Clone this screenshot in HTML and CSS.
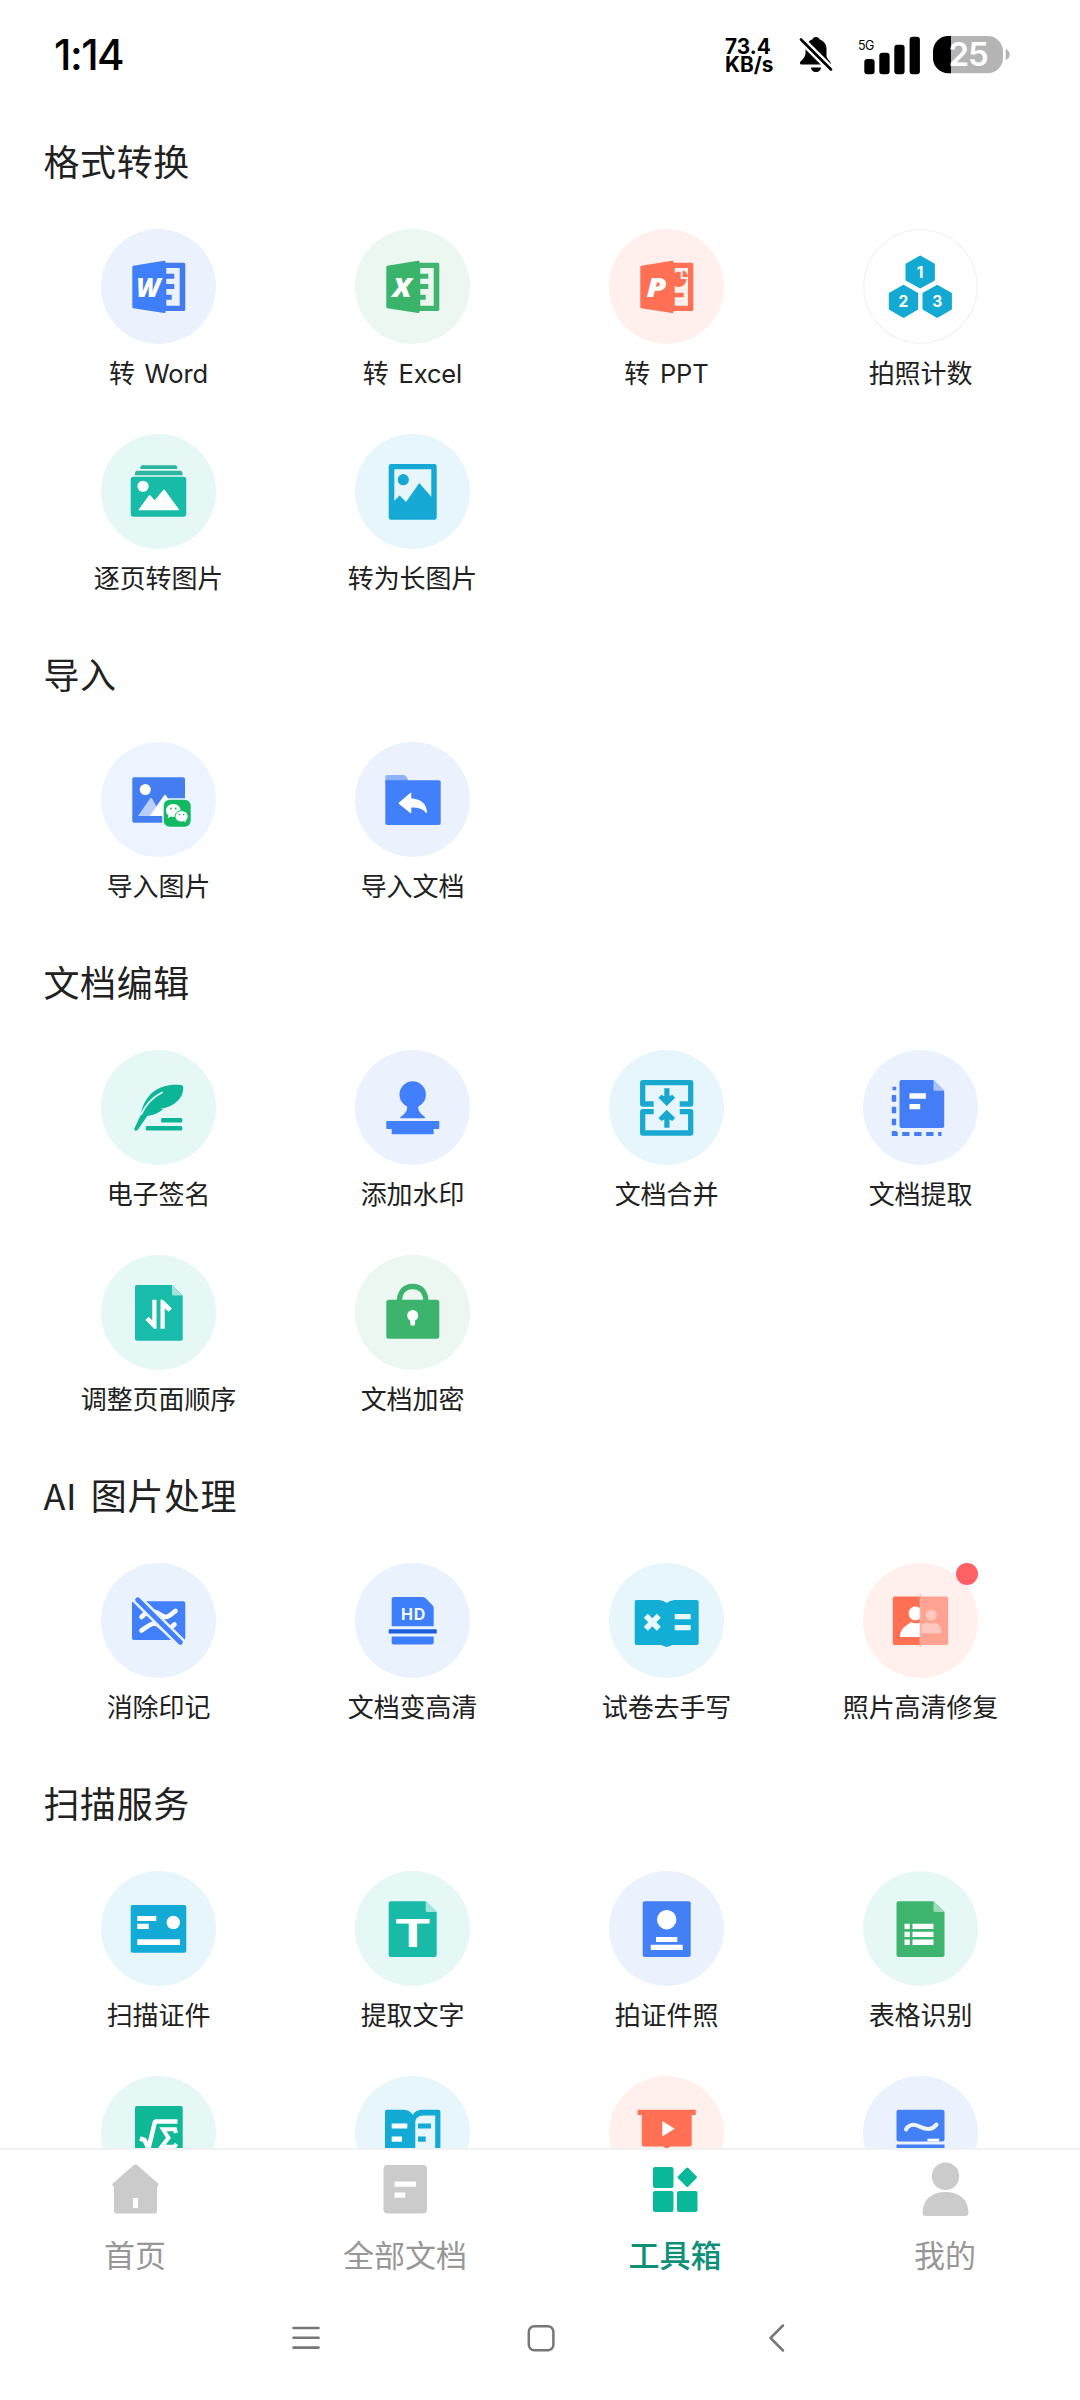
FILE: index.html
```html
<!DOCTYPE html>
<html lang="zh-CN">
<head>
<meta charset="utf-8">
<title>工具箱</title>
<link rel="stylesheet" href="styles.css">
</head>
<body>
<div class="screen">
<header class="status">
  <time class="clock">1:14</time>
  <div class="speed"><span>73.4</span><span>KB/s</span></div>
  <svg class="bell" width="34" height="37" viewBox="0 0 34 37">
    <path d="M17 1c2 0 3.300 1 3.600 2.600C25 5 27.500 8.500 27.500 13v7c0 3 4.500 5 4.500 8.500H3C.5 28.500.5 26.500 2 25c3-3 4.500-5 4.500-8V13c0-4.500 2.500-8 6.900-9.400C13.700 2 15 1 17 1z"/>
    <path d="M12 31.500h10c0 2.500-2.200 4.500-5 4.500s-5-2-5-4.500z"/>
    <path d="M1.500 3l30.500 30.500" stroke="#fff" stroke-width="7.500"/>
    <path d="M2 3.500l30 30" stroke="#000" stroke-width="2.700" stroke-linecap="round"/>
  </svg>
  <svg class="signal" width="62" height="39" viewBox="0 0 62 39">
    <text x="0" y="14" class="net">5G</text>
    <rect x="6.300" y="23" width="10.300" height="15.300" rx="3"/>
    <rect x="21.300" y="16.700" width="10.300" height="21.600" rx="3"/>
    <rect x="36.300" y="8.700" width="10.300" height="29.600" rx="3"/>
    <rect x="51.600" y=".7" width="10.300" height="37.600" rx="3"/>
  </svg>
  <svg class="battery" width="78" height="38" viewBox="0 0 78 38">
    <path d="M15.300 0h39.400a15.300 15.300 0 0 1 15.300 15.300v6.700a15.300 15.300 0 0 1-15.300 15.300H18V0z" fill="#b4b4b4"/>
    <path d="M18 0v37.300h-2.700A15.300 15.300 0 0 1 0 22v-6.700A15.300 15.300 0 0 1 15.300 0z"/>
    <path d="M72.700 13q4 1.500 4 5.500t-4 5.500z" fill="#b4b4b4"/>
    <text x="15.500" y="30.300" class="level">25</text>
  </svg>
</header>

<main class="content">
<section class="group">
  <h2>格式转换</h2>
  <div class="grid">
    <a class="tool"><span class="disc indigo"><svg viewBox="0 0 115 115">
      <path fill="#427bef" fill-rule="evenodd" d="M64 33.700h18.800q1.500 0 1.500 1.500v45.300q0 1.500-1.500 1.500H64zM65.300 39v5.700h8v5h-8V55h8v5h-8v5.700h5.400v5h-5.400v6h13.400V39z"/>
      <path fill="#3f7ffc" d="M31.300 38q0-1 1-1.200L63 31.700q1.500-.3 1.500 1V83q0 1.300-1.500 1L32.300 79.200q-1-.2-1-1.200z"/>
      <text class="app" x="35.300" y="67.500" textLength="24" lengthAdjust="spacingAndGlyphs">W</text>
    </svg></span><span class="name">转 <i>Word</i></span></a>
    <a class="tool"><span class="disc green"><svg viewBox="0 0 115 115">
      <path fill="#3fb56f" fill-rule="evenodd" d="M64 33.700h18.800q1.500 0 1.500 1.500v45.300q0 1.500-1.500 1.500H64zM65.300 39v5.700h8v5h-8V55h8v5h-8v5.700h5.400v5h-5.400v6h13.400V39z"/>
      <path fill="#3bb46b" d="M31.300 38q0-1 1-1.200L63 31.700q1.500-.3 1.500 1V83q0 1.300-1.500 1L32.300 79.200q-1-.2-1-1.200z"/>
      <text class="app" x="37.500" y="67.800" textLength="19" lengthAdjust="spacingAndGlyphs">X</text>
    </svg></span><span class="name">转 <i>Excel</i></span></a>
    <a class="tool"><span class="disc red"><svg viewBox="0 0 115 115">
      <path fill="#ff7054" fill-rule="evenodd" d="M64 33.700h18.800q1.500 0 1.500 1.500v45.300q0 1.500-1.500 1.500H64zM65.700 39v5q3-2 6-1v7h6q-1 7-7.500 8-3 0-4.500-1v6.700h9V68.300h-9v8.400H79V39z"/>
      <path fill="#ff7054" d="M73.500 41.500q5 1 5.500 6.500h-5.500z"/>
      <path fill="#ff7054" d="M31.300 38q0-1 1-1.200L63 31.700q1.500-.3 1.500 1V83q0 1.300-1.500 1L32.300 79.200q-1-.2-1-1.200z"/>
      <text class="app" x="37.500" y="68" textLength="20" lengthAdjust="spacingAndGlyphs">P</text>
    </svg></span><span class="name">转 <i>PPT</i></span></a>
    <a class="tool"><span class="disc plain"><svg viewBox="0 0 115 115">
      <g fill="#14a9d3" stroke="#14a9d3" stroke-width="2" stroke-linejoin="round">
      <path d="M57.200 27.500l13.700 7.800v15.500l-13.700 7.700-13.700-7.700V35.300z"/>
      <path d="M40.500 56.800l13.700 7.800V80l-13.700 7.800L26.800 80V64.600z"/>
      <path d="M74.200 56.800l13.700 7.800V80l-13.700 7.800L60.500 80V64.600z"/></g>
      <g class="digit"><text x="57.200" y="48.700">1</text><text x="40.500" y="78">2</text><text x="74.200" y="78">3</text></g>
    </svg></span><span class="name">拍照计数</span></a>
    <a class="tool"><span class="disc teal"><svg viewBox="0 0 115 115">
      <path fill="#2db5a0" d="M41 31.300h33.500q1.800 0 1.800 3.700h-37q0-3.700 1.700-3.700zM36 36.700h43.500q2 0 2.200 4.600h-48q.2-4.600 2.300-4.600z"/>
      <rect x="29.700" y="42.700" width="55.600" height="40" rx="3" fill="#18bba7"/>
      <g fill="#fff"><circle cx="42" cy="52.300" r="5.600"/><path d="M38 76.300q-.8 0-.3-.8l10-13.700q1-1.200 2 0l4 4.500 8.500-10.400q.8-1 1.600 0L78 75.500q.4.800-.4.800z"/></g>
    </svg></span><span class="name">逐页转图片</span></a>
    <a class="tool"><span class="disc cyan"><svg viewBox="0 0 115 115">
      <path fill="#16a9d6" fill-rule="evenodd" d="M36 30h43.500q2.200 0 2.200 2.200v51.300q0 2.200-2.200 2.200H36q-2.300 0-2.300-2.200V32.200Q33.700 30 36 30zM39.300 35.300v31.400l5.400-5.200L51 68l13.300-19 12 13.700V35.300z"/>
      <circle cx="48.300" cy="45.700" r="5.600" fill="#16a9d6"/>
    </svg></span><span class="name">转为长图片</span></a>
  </div>
</section>

<section class="group">
  <h2>导入</h2>
  <div class="grid">
    <a class="tool"><span class="disc blue"><svg viewBox="0 0 115 115">
      <rect x="31.300" y="35.300" width="52.700" height="45.400" rx="2" fill="#447def"/>
      <circle cx="44.300" cy="47.500" r="5.500" fill="#fff"/>
      <path fill="#b9cffc" d="M37 74l12-17.500q1-1.300 2 0L61 74z"/><path fill="#fff" d="M48.700 74l14.300-20.500q1-1.300 2 0L79 74z"/>
      <rect x="61.200" y="56.200" width="30" height="30" rx="7.500" fill="#eff9ff"/>
      <rect x="62.700" y="57.700" width="27" height="27" rx="6" fill="#12b961"/>
      <path fill="#fff" d="M72.300 62c4 0 7.300 2.900 7.300 6.500s-3.300 6.500-7.300 6.500l-2.500-.4-3.200 1.700.8-2.800c-1.500-1.200-2.400-3-2.400-5 0-3.600 3.300-6.500 7.300-6.500z"/>
      <path fill="#fff" stroke="#12b961" stroke-width="1" d="M80.600 68.700c3.700 0 6.500 2.500 6.500 5.700 0 1.800-.9 3.300-2.200 4.300l.6 2.500-2.700-1.500-2.200.3c-3.700 0-6.500-2.400-6.500-5.600s2.800-5.700 6.500-5.700z"/>
      <g fill="#12b961"><circle cx="70" cy="66.500" r=".9"/><circle cx="74.700" cy="66.500" r=".9"/><circle cx="78.400" cy="72.600" r=".8"/><circle cx="82.600" cy="72.600" r=".8"/></g>
    </svg></span><span class="name">导入图片</span></a>
    <a class="tool"><span class="disc indigo"><svg viewBox="0 0 115 115">
      <path fill="#8eb2fb" d="M32 33h16.500q1.800 0 2.800 1.500l3 5.500h-24v-5q0-2 1.700-2z"/>
      <path fill="#427ffa" d="M30.300 38.300h53.400q2 0 2 2V81q0 2-2 2H32.300q-2 0-2-2z"/>
      <path fill="#fff" d="M44 60.500l11.300-9.600q1-.8 1 .5v5C65 56.500 71.500 61 72 70q0 2-1.200.5Q66 65 56.300 65.500v4.800q0 1.500-1 .6L44 62q-.8-.7 0-1.500z"/>
    </svg></span><span class="name">导入文档</span></a>
  </div>
</section>

<section class="group">
  <h2>文档编辑</h2>
  <div class="grid">
    <a class="tool"><span class="disc teal2"><svg viewBox="0 0 115 115">
      <g fill="#0cb597"><path d="M40.300 62.500C41.500 55 46 47 52 42c8-6.500 18-8 28-7q2.500.5 2.300 3c0 7-4 13-12 17.500-4 2-8 2.700-11 3.200l3 .3c-4 3.500-9 6-16 7L37 79.500q-1 1.500-3 1-1.400-.5-.6-2l7-15z"/>
      <path fill="none" stroke="#e5f8f5" stroke-width="1.800" stroke-linecap="round" d="M61 42.500C51 47.500 45 54 40.500 64"/>
      <rect x="60" y="68" width="21.300" height="4.500" rx="1.500"/><rect x="44.700" y="76" width="36.600" height="4.500" rx="1.500"/></g>
    </svg></span><span class="name">电子签名</span></a>
    <a class="tool"><span class="disc indigo"><svg viewBox="0 0 115 115">
      <g fill="#427ffa"><circle cx="57.700" cy="44.500" r="13.200"/><path d="M52 55h11.400c-1 6 2.600 9 6.600 12q1 1.300-.5 1.300H46q-1.500 0-.5-1.300c4-3 7.500-6 6.500-12z"/>
      <path d="M32 71h51.500q.8 0 .8.800v6.400q0 .8-.8.800h-4.800v4.500q0 .8-.8.800H37.500q-.8 0-.8-.8V79H32q-.7 0-.7-.8v-6.400q0-.8.700-.8z"/></g>
    </svg></span><span class="name">添加水印</span></a>
    <a class="tool"><span class="disc cyan2"><svg viewBox="0 0 115 115">
      <g fill="none" stroke="#19a9d0" stroke-width="5.300" stroke-linejoin="round"><path d="M44.700 54h-11V32.700h48V54h-11M44.700 61.700h-11V83h48V61.700h-11"/></g>
      <g fill="#19a9d0"><path d="M55.300 38.300h5.200v7.900l2.700-1.500 3 3-8.500 8.200-8.300-8.200 3-3 2.900 1.500z"/><path d="M55.300 77.700h5.200v-8.300l2.700 1.500 3-3-8.500-8.200-8.300 8.200 3 3 2.900-1.500z"/></g>
    </svg></span><span class="name">文档合并</span></a>
    <a class="tool"><span class="disc indigo"><svg viewBox="0 0 115 115">
      <g fill="#447df5"><path d="M38.500 30h32l10.700 10.700V76q0 2-2 2H38.500q-2 0-2-2V32q0-2 2-2z"/>
      <path d="M29.500 36.700h3.700v3.600h-3.700zM28.800 45h4.400v6.700h-4.400zM28.800 56.700h4.400v6.600h-4.400zM28.800 68.700h4.400v6.600h-4.400zM28.800 81h4.400l1.600 1.500V86h-6zM39.200 82h7.300v4h-7.300zM51.200 82h7.300v4h-7.300zM63.200 82h7.300v4h-7.300zM75.200 82h3.300v4h-3.300z"/></g>
      <path d="M70.500 30l10.700 10.700H72q-1.500 0-1.500-1.500z" fill="#a9c4fc"/>
      <path d="M46.500 43.300h16.300v5.400H46.500zM46.500 54h10.700v5.300H46.500z" fill="#fff"/>
    </svg></span><span class="name">文档提取</span></a>
    <a class="tool"><span class="disc teal"><svg viewBox="0 0 115 115">
      <path fill="#19bbaa" d="M36 30h35l10.700 10.500v43.300q0 2-2 2H36q-2 0-2-2V32q0-2 2-2z"/><path fill="#a3e4dd" d="M71 30l10.700 10.500H72.500q-1.500 0-1.500-1.500z"/>
      <path fill="#fff" d="M51.300 44.800h4.200v29h-2.300L44.500 65l3-3.300 3.800 3.500zM59.500 73.800h4.200V53.500l4 3.300 3.200-3.200-9-8.800h-2.400z"/>
    </svg></span><span class="name">调整页面顺序</span></a>
    <a class="tool"><span class="disc green"><svg viewBox="0 0 115 115">
      <path fill="none" stroke="#3db46d" stroke-width="5.300" d="M44.300 47.500C44.300 37 49.500 31.500 57.700 31.500S71 37 71 47.500"/>
      <rect x="31.300" y="44.800" width="53" height="39" rx="2.500" fill="#3db46d"/>
      <circle cx="57.700" cy="60.500" r="5.500" fill="#fff"/><rect x="55.300" y="62" width="4.800" height="8.800" rx="2" fill="#fff"/>
    </svg></span><span class="name">文档加密</span></a>
  </div>
</section>

<section class="group">
  <h2>AI 图片处理</h2>
  <div class="grid">
    <a class="tool"><span class="disc blue2"><svg viewBox="0 0 115 115">
      <rect x="31" y="38.200" width="53.300" height="38.700" rx="2" fill="#427ffa"/>
      <g fill="none" stroke="#fff" stroke-width="4.600" stroke-linecap="round"><path d="M40.500 54q6-6.500 12-5.500c5 1 8 5 12 5.500 4 .2 6-3.500 10-6M40.500 67.500c5-3 8-6.500 13-7 5 0 7 6 11 6.500 4 0 6-3.500 9-5.500"/></g>
      <path d="M32.500 32.500l52 52" stroke="#eaf2fe" stroke-width="10"/>
      <path d="M36.700 36.800l42.600 42.400" stroke="#427ffa" stroke-width="5" stroke-linecap="round"/>
    </svg></span><span class="name">消除印记</span></a>
    <a class="tool"><span class="disc blue2"><svg viewBox="0 0 115 115">
      <path fill="#3d7ffb" d="M38.700 33.900H68l2 .8 8 8 .7 2v18.500h-42V35.900q0-2 2-2zM36.700 73.600h42v6q0 2-2 2h-38q-2 0-2-2z"/>
      <path fill="#1c5ddc" d="M33.700 66.200h48v4.400h-48z"/>
      <text x="46" y="57.300" class="hd">HD</text>
    </svg></span><span class="name">文档变高清</span></a>
    <a class="tool"><span class="disc cyan"><svg viewBox="0 0 115 115">
      <path fill="#13aed6" d="M27.700 36.900H50q5 .3 7.700 3 2.700-2.700 7.700-3h22.300q2 0 2 2v41q0 2-2 2H63.500l-5.800 2-5.800-2H27.700q-2 0-2-2v-41q0-2 2-2z"/>
      <path d="M36.800 52.700l13 13M49.800 52.700l-13 13" stroke="#e9faff" stroke-width="5.700"/>
      <path fill="#e9faff" d="M65.700 50.900h16v5.300h-16zM65.700 61.900h16v5.300h-16z"/>
    </svg></span><span class="name">试卷去手写</span></a>
    <a class="tool"><span class="disc red"><svg viewBox="0 0 115 115">
      <path fill="#ff6f52" d="M31.800 33.600H57v48.300H31.800q-2 0-2-2V35.600q0-2 2-2z"/><path fill="#ffa292" d="M57 33.600h26.200q2 0 2 2v44.300q0 2-2 2H57z"/>
      <path fill="#fff" d="M57 45.200v10.600q-2 1.500-4.800 1.500a6.900 6.900 0 1 1 4.800-12.100zM57 60v13.900H36.800q0-7 7-11.900l4.500-3q2 1.300 4 1.300z"/>
      <g fill="#ffc8be"><circle cx="68.200" cy="52.200" r="5.500"/><path d="M58.500 70.200V61.500q3-1.500 5.500-2 4.200 2 8.500 0 6 3 6 10.700z"/></g>
      <path d="M57.300 31v53" stroke="#ffb5a8" stroke-width="1.300"/>
    </svg><b class="dot"></b></span><span class="name">照片高清修复</span></a>
  </div>
</section>

<section class="group">
  <h2>扫描服务</h2>
  <div class="grid">
    <a class="tool"><span class="disc cyan"><svg viewBox="0 0 115 115">
      <rect x="29.700" y="34" width="55.600" height="47.700" rx="2" fill="#13abd6"/>
      <path fill="#fff" d="M36.300 45h19v5h-19zM36.300 52.700h11.400V58H36.300zM36.300 68.300H79V74H36.300z"/><circle cx="72.300" cy="51.500" r="6.700" fill="#fff"/>
    </svg></span><span class="name">扫描证件</span></a>
    <a class="tool"><span class="disc teal"><svg viewBox="0 0 115 115">
      <path fill="#19baa8" d="M35.700 30.300h35L81.700 41v43q0 2-2 2h-44q-2 0-2-2V32.300q0-2 2-2z"/><path fill="#a3e4dd" d="M70.700 30.300L81.700 41h-9.500q-1.500 0-1.500-1.500z"/>
      <text x="40.500" y="75.700" class="big-t" textLength="34.500" lengthAdjust="spacingAndGlyphs">T</text>
    </svg></span><span class="name">提取文字</span></a>
    <a class="tool"><span class="disc indigo"><svg viewBox="0 0 115 115">
      <rect x="33.700" y="30.300" width="48" height="55.700" rx="2" fill="#437ff5"/>
      <circle cx="57.700" cy="48.700" r="9.700" fill="#fff"/><path fill="#fff" d="M47 66h21.300v5H47zM41.700 73.700h32V79h-32z"/>
    </svg></span><span class="name">拍证件照</span></a>
    <a class="tool"><span class="disc teal"><svg viewBox="0 0 115 115">
      <path fill="#3eb56e" d="M35.500 30.300h35L81.500 41v43q0 2-2 2h-44q-2 0-2-2V32.300q0-2 2-2z"/><path fill="#9bdab4" d="M70.500 30.300L81.500 41H72q-1.500 0-1.500-1.500z"/>
      <path fill="#fff" d="M41.500 52.700h5.300V58h-5.300zM49.500 52.700h21V58h-21zM41.500 60.700h5.300V66h-5.300zM49.500 60.700h21V66h-21zM41.500 68.500h5.300V74h-5.300zM49.500 68.500h21V74h-21z"/>
    </svg></span><span class="name">表格识别</span></a>
    <a class="tool"><span class="disc teal"><svg viewBox="0 0 115 115">
      <rect x="34" y="30.100" width="47.700" height="56" rx="2" fill="#0fb897"/>
      <path fill="none" stroke="#fff" stroke-width="4.500" stroke-linejoin="bevel" d="M39 62.500l4.500 1.500 4 8.500 6.500-27h22.500"/>
      <path fill="none" stroke="#fff" stroke-width="4" d="M75 57l-1-3.700H62l5.500 8.500-7 9h13l2-3"/>
    </svg></span></a>
    <a class="tool"><span class="disc cyan"><svg viewBox="0 0 115 115">
      <path fill="#13abd6" fill-rule="evenodd" d="M32 33.800h16q6.500 0 9.700 5 3.200-5 9.700-5h16q2 0 2 2V80H30V35.800q0-2 2-2zM68.500 39.500Q60.500 40 60.300 46v32h19.900V39.500z"/>
      <path fill="#fff" d="M36.700 47.500h15.600v5H36.700zM36.700 60.500H47v5.300H36.700z"/><path fill="#13abd6" d="M63 47.500h13v5H63zM63 60.500h7.700v5.300H63z"/>
    </svg></span></a>
    <a class="tool"><span class="disc red"><svg viewBox="0 0 115 115">
      <path fill="#ff7054" d="M28.700 33.800h58v5.300h-4V68.500q0 2-2 2H61q-1 1.500-3.300 1.500t-3.300-1.500H34.700q-2 0-2-2V39.100h-4z"/>
      <path fill="#fff" d="M53.300 45.100l12.400 7.700-12.400 7.700z"/>
    </svg></span></a>
    <a class="tool"><span class="disc indigo"><svg viewBox="0 0 115 115">
      <path fill="#437ff5" d="M35.500 33.800h44q2 0 2 2v27.700q0 2-2 2h-44q-2 0-2-2V35.800q0-2 2-2zM33.500 68.500h48V74h-48z"/>
      <path fill="none" stroke="#eef5ff" stroke-width="4" stroke-linecap="round" d="M43 53.500c2-4 6-6 11-4s8 4 12 3.500 6-2.500 7.500-4.500"/><path fill="#fff" d="M64.500 62.700h11.700v2.800H64.500z"/>
    </svg></span></a>
  </div>
</section>
</main>

<nav class="tabs">
  <a class="tab"><svg viewBox="0 0 56 56"><path fill="#cbcbcb" fill-rule="evenodd" d="M26.500 3.200q2-1.600 4 0l20.300 18q1.700 2.800-.8 3.300V49q0 2.500-2.500 2.500h-38Q7 51.500 7 49V24.500q-2.700-.5-1-3.300zM26 36v10h5V36z"/></svg>首页</a>
  <a class="tab"><svg viewBox="0 0 56 56"><rect x="6.500" y="3" width="43.500" height="48.500" rx="4" fill="#cbcbcb"/><path fill="#fff" d="M17.500 19.500H39v5.300H17.500zM17.500 30.500h10.700v5.300H17.500z"/></svg>全部文档</a>
  <a class="tab active"><svg viewBox="0 0 56 56"><g fill="#08b898"><rect x="6" y="5" width="20.500" height="21" rx="2"/><rect x="6" y="29" width="20.500" height="21" rx="2"/><rect x="30" y="29" width="20.500" height="21" rx="2"/><rect x="33" y="8" width="14.500" height="14.500" rx="1.500" transform="rotate(45 40.250 15.250)"/></g></svg>工具箱</a>
  <a class="tab"><svg viewBox="0 0 56 56"><g fill="#cbcbcb"><circle cx="28.500" cy="14.300" r="13.700"/><path d="M5.500 50.500C6 37 15 30 28.500 30S51 37 51.500 50.500q0 3.500-3 3.500h-40q-3 0-3-3.500z"/></g></svg>我的</a>
</nav>
<footer class="keys">
  <svg viewBox="0 0 30 30"><path d="M2.500 5h25M2.500 14.800h25M2.500 24.600h25" stroke-width="2.600"/></svg>
  <svg viewBox="0 0 30 30"><rect x="2.800" y="3.200" width="24.600" height="24" rx="5.500"/></svg>
  <svg viewBox="0 0 30 30"><path d="M22 2.500L9.500 15 22 27.500"/></svg>
</footer>
</div>
</body>
</html>
```
FILE: styles.css
```css
* { box-sizing: border-box; }
body { margin: 0; background: #fff; font-family: "Noto Sans CJK SC", sans-serif; color: #212121; }
svg { display: block; overflow: visible; }
h2 { margin: 0; font-weight: 400; }

.screen { width: 1080px; height: 2400px; display: flex; flex-direction: column; overflow: hidden; }

.status { height: 126px; flex: none; display: flex; align-items: flex-start; padding: 36px 69px 0 54px; font-family: Inter, sans-serif; color: #000; }
.clock { font-size: 42px; font-weight: 500; line-height: 38px; letter-spacing: -1.500px; margin-right: auto; }
.speed { display: flex; flex-direction: column; width: 74px; padding-top: 2px; font-size: 20.800px; font-weight: 700; line-height: 18px; }
.bell { margin: 0 25px 0 0; }
.signal { margin-right: 13px; }
.net { font-size: 12.500px; letter-spacing: -.5px; }
.level { font-size: 33px; font-weight: 600; fill: #fff; letter-spacing: -1px; }

.content { height: 2022px; flex: none; overflow: hidden; }
.group h2 { height: 69px; line-height: 69px; padding-left: 43.500px; margin-bottom: 33.700px; font-size: 36px; letter-spacing: .6px; word-spacing: 5px; }
.grid { display: grid; grid-template-columns: repeat(4, 1fr); grid-auto-rows: 205.200px; padding: 0 33px 0 31px; }
.tool { display: flex; flex-direction: column; align-items: center; gap: 10.500px; }
.disc { position: relative; width: 115px; height: 115px; flex: none; border-radius: 50%; }
.disc svg { width: 115px; height: 115px; }
.name { padding-left: 1px; font-size: 26px; line-height: 36px; letter-spacing: -.1px; word-spacing: 4px; white-space: nowrap; }
.name i { font-family: Inter, sans-serif; font-style: normal; font-size: 25.500px; }

.indigo { background: #ecf1fe; }
.blue { background: #edf4ff; }
.blue2 { background: #eaf2fe; }
.green { background: #ebf7f0; }
.red { background: #fff0ed; }
.teal { background: #e6f8f5; }
.teal2 { background: #e5f8f5; }
.cyan { background: #e6f6fb; }
.cyan2 { background: #e7f6fa; }
.plain { background: #fff; box-shadow: inset 0 0 0 1.500px #f4f4f4; }
.dot { position: absolute; top: 0; right: 0; width: 22px; height: 22px; border-radius: 50%; background: #ff6064; }

.app { font-family: "Open Sans", sans-serif; font-weight: 800; font-style: italic; font-size: 26px; fill: #fff; }
.digit { font-family: Inter, sans-serif; font-weight: 700; font-size: 15.500px; fill: #fff; text-anchor: middle; }
.hd { font-family: Inter, sans-serif; font-weight: 700; font-size: 16px; fill: #f2f8ff; letter-spacing: .8px; }
.big-t { font-family: "Liberation Sans", sans-serif; font-weight: 700; font-size: 40px; fill: #fff; }

.tabs { height: 138px; flex: none; display: grid; grid-template-columns: repeat(4, 1fr); border-top: 2px solid #f1f1f1; padding-top: 12px; background: #fff; font-size: 31px; line-height: 44px; color: #979797; }
.tab { display: flex; flex-direction: column; align-items: center; gap: 13.500px; }
.tab svg { width: 56px; height: 56px; }
.active { color: #0d8f78; font-weight: 500; }

.keys { flex: 1; display: flex; justify-content: center; gap: 205px; padding: 37px 0 0 2px; }
.keys svg { width: 30px; height: 30px; fill: none; stroke: #777; stroke-width: 2.500; stroke-linecap: round; stroke-linejoin: round; }
```
